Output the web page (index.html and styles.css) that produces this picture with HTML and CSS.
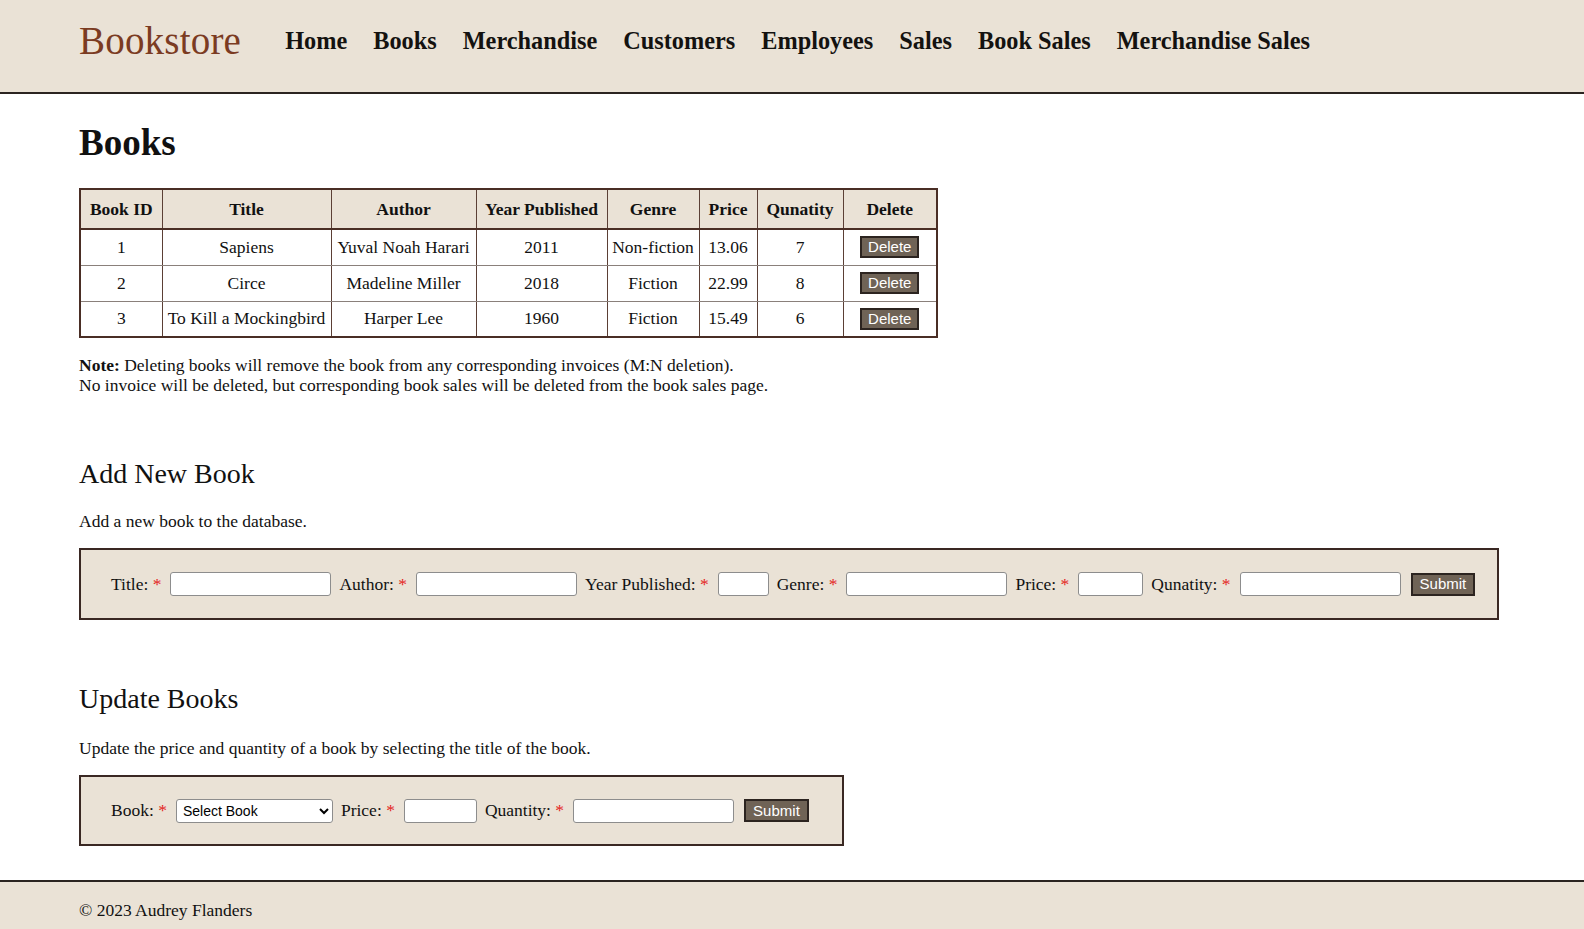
FILE: index.html
```html
<!DOCTYPE html>
<html lang="en">
<head>
<meta charset="utf-8">
<title>Books</title>
<link rel="stylesheet" href="styles.css">
</head>
<body>
<header class="site-header">
  <a class="logo" href="#">Bookstore</a>
  <nav class="nav">
    <a href="#">Home</a>
    <a href="#">Books</a>
    <a href="#">Merchandise</a>
    <a href="#">Customers</a>
    <a href="#">Employees</a>
    <a href="#">Sales</a>
    <a href="#">Book Sales</a>
    <a href="#">Merchandise Sales</a>
  </nav>
</header>
<main class="content">
  <h1 class="page-title">Books</h1>
  <table class="data-table">
    <thead>
      <tr>
        <th class="c-id">Book ID</th>
        <th class="c-title">Title</th>
        <th class="c-author">Author</th>
        <th class="c-year">Year Published</th>
        <th class="c-genre">Genre</th>
        <th class="c-price">Price</th>
        <th class="c-qty">Qunatity</th>
        <th class="c-del">Delete</th>
      </tr>
    </thead>
    <tbody>
      <tr><td>1</td><td>Sapiens</td><td>Yuval Noah Harari</td><td>2011</td><td>Non-fiction</td><td>13.06</td><td>7</td><td><button class="btn">Delete</button></td></tr>
      <tr><td>2</td><td>Circe</td><td>Madeline Miller</td><td>2018</td><td>Fiction</td><td>22.99</td><td>8</td><td><button class="btn">Delete</button></td></tr>
      <tr><td>3</td><td>To Kill a Mockingbird</td><td>Harper Lee</td><td>1960</td><td>Fiction</td><td>15.49</td><td>6</td><td><button class="btn">Delete</button></td></tr>
    </tbody>
  </table>
  <p class="note"><strong>Note:</strong> Deleting books will remove the book from any corresponding invoices (M:N deletion).<br>No invoice will be deleted, but corresponding book sales will be deleted from the book sales page.</p>

  <h2 class="section-title">Add New Book</h2>
  <p class="section-desc">Add a new book to the database.</p>
  <form class="form-box form-wide">
    <label>Title: <span class="req">*</span></label><input class="in-wide" type="text">
    <label>Author: <span class="req">*</span></label><input class="in-wide" type="text">
    <label>Year Published: <span class="req">*</span></label><input class="in-year" type="text">
    <label>Genre: <span class="req">*</span></label><input class="in-wide" type="text">
    <label>Price: <span class="req">*</span></label><input class="in-price" type="text">
    <label>Qunatity: <span class="req">*</span></label><input class="in-wide" type="text">
    <button class="btn btn-submit" type="button">Submit</button>
  </form>

  <h2 class="section-title section-title-2">Update Books</h2>
  <p class="section-desc section-desc-2">Update the price and quantity of a book by selecting the title of the book.</p>
  <form class="form-box form-narrow">
    <label>Book: <span class="req">*</span></label>
    <select class="in-select"><option>Select Book</option></select>
    <label>Price: <span class="req">*</span></label><input class="in-price2" type="text">
    <label>Quantity: <span class="req">*</span></label><input class="in-wide" type="text">
    <button class="btn btn-submit" type="button">Submit</button>
  </form>
</main>
<footer class="site-footer">
  <p>&copy; 2023 Audrey Flanders</p>
</footer>
</body>
</html>
```

FILE: styles.css
```css
* { box-sizing: border-box; }
html, body { margin: 0; padding: 0; }
body {
  font-family: "Liberation Serif", "Times New Roman", serif;
  font-size: 17.5px;
  color: #111;
  background: #fff;
}
.site-header {
  display: flex;
  align-items: center;
  height: 94px;
  padding: 0 0 11px 79px;
  background: #eae2d6;
  border-bottom: 2px solid #2b2421;
}
.logo {
  font-family: "Liberation Serif", serif;
  font-size: 39px;
  color: #7b3b22;
  text-decoration: none;
  margin-right: 44px;
  letter-spacing: 0.2px;
}
.nav { display: flex; gap: 26px; }
.nav a {
  font-family: "Liberation Serif", serif;
  font-weight: bold;
  font-size: 24.3px;
  color: #141210;
  text-decoration: none;
}
.content { padding: 0 85px 0 79px; }
.page-title {
  font-size: 37px;
  font-weight: bold;
  margin: 28px 0 0;
  line-height: 41px;
}
.data-table {
  margin-top: 25px;
  border-collapse: collapse;
  border: 2px solid #4a2e25;
  font-size: 17.5px;
}
.data-table th {
  background: #eae2d6;
  font-weight: bold;
  height: 40px;
  border: 1px solid #5b3f35;
  border-bottom: 2px solid #4a2e25;
  padding: 0 3px;
}
.data-table td {
  height: 36px;
  text-align: center;
  border: 1px solid #8a807b;
  border-left-color: #5b3f35;
  border-right-color: #5b3f35;
  padding: 0 3px;
}
.c-id { width: 82px; }
.c-title { width: 169px; }
.c-author { width: 145px; }
.c-year { width: 131px; }
.c-genre { width: 92px; }
.c-price { width: 58px; }
.c-qty { width: 86px; }
.c-del { width: 94px; }
.btn {
  font-family: "Liberation Sans", Arial, sans-serif;
  font-size: 15px;
  color: #fff;
  background: #6f6356;
  border: 2px solid #2c2420;
  padding: 0 6px;
  height: 22px;
  line-height: 18px;
  cursor: pointer;
}
.note {
  margin: 17px 0 0;
  line-height: 20px;
}
.section-title {
  font-weight: normal;
  font-size: 28px;
  line-height: 32px;
  margin: 63px 0 0;
}
.section-desc {
  margin: 21px 0 0;
  line-height: 20px;
}
.section-desc-2 { margin-top: 23px; }
.form-box {
  display: flex;
  align-items: center;
  height: 72px;
  padding: 0 30px;
  background: #eae2d6;
  border: 2px solid #3a2823;
  margin-top: 17px;
}
.form-narrow { display: inline-flex; margin-top: 17px; padding-right: 33px; height: 71px; }
.form-box label { white-space: nowrap; margin-right: 9px; }
.req { color: #e4231b; }
.form-box input, .form-box select {
  height: 24px;
  border: 1px solid #8d8d8d;
  border-radius: 3px;
  background: #fff;
  margin-right: 8px;
  font-size: 14px;
}
.in-wide { width: 161px; }
.in-year { width: 51px; }
.in-price { width: 65px; }
.in-price2 { width: 73px; }
.in-select {
  width: 157px;
  font-family: "Liberation Sans", Arial, sans-serif;
  font-size: 14px;
  color: #000;
  padding: 0 2px;
}
.btn-submit { height: 23px; padding: 0 7px; margin-left: 2px; }
.site-footer {
  margin-top: 34px;
  background: #eae2d6;
  border-top: 2px solid #2b2421;
  padding: 18px 79px 24px;
}
.site-footer p { margin: 0; font-size: 17.5px; line-height: 20px; }
```
